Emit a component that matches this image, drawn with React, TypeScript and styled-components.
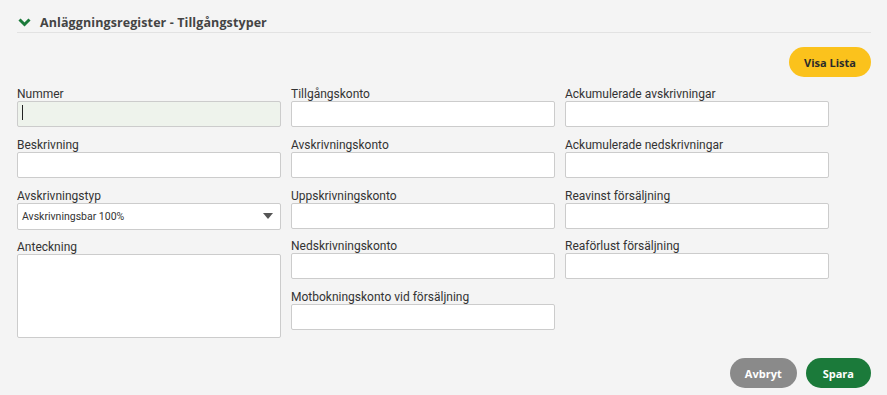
import React from 'react';
import styled, { createGlobalStyle } from 'styled-components';

const colors = {
  bg: '#f4f4f4',
  text: '#333333',
  heading: '#444444',
  border: '#cccccc',
  green: '#1b7a3a',
  yellow: '#fbc21c',
  gray: '#8a8a8a',
};

const GlobalStyle = createGlobalStyle`
  html, body {
    margin: 0;
    padding: 0;
    background: ${colors.bg};
    font-family: Roboto, "Liberation Sans", sans-serif;
  }
`;

const Page = styled.div`
  padding: 12px 16px 0 17px;
  height: 395px;
  box-sizing: border-box;
`;

const Header = styled.div`
  display: flex;
  align-items: center;
  gap: 9px;
  height: 20px;
  padding-left: 1px;
  border-bottom: 1px solid #e2e2e2;
`;

const HeaderTitle = styled.h2`
  margin: 0;
  font-family: "Open Sans", sans-serif;
  font-size: 12.5px;
  font-weight: 700;
  color: ${colors.heading};
  letter-spacing: 0.1px;
`;

const Toolbar = styled.div`
  display: flex;
  justify-content: flex-end;
  margin-top: 14px;
`;

const PillButton = styled.button<{ tone: 'yellow' | 'gray' | 'green' }>`
  border: none;
  border-radius: 16px;
  height: 30px;
  padding: 0 ${({ tone }) => (tone === 'green' ? 17 : 15)}px;
  font-family: "Open Sans", sans-serif;
  font-size: 11px;
  font-weight: 700;
  cursor: pointer;
  background: ${({ tone }) =>
    tone === 'yellow' ? colors.yellow : tone === 'gray' ? colors.gray : colors.green};
  color: ${({ tone }) => (tone === 'yellow' ? '#2b2b2b' : '#ffffff')};
`;

const Grid = styled.div`
  display: grid;
  grid-template-columns: 264px 264px 264px;
  column-gap: 10px;
  margin-top: 10px;
  align-items: start;
`;

const Column = styled.div`
  display: flex;
  flex-direction: column;
  gap: 10.75px;
`;

const Field = styled.div`
  display: flex;
  flex-direction: column;
`;

const Label = styled.label`
  font-size: 12px;
  color: ${colors.text};
  line-height: 14px;
  height: 14px;
`;

const InputWrap = styled.div`
  position: relative;
`;

const TextInput = styled.input<{ active?: boolean }>`
  box-sizing: border-box;
  width: 100%;
  height: 26px;
  border: 1px solid ${colors.border};
  border-radius: 2px;
  background: ${({ active }) => (active ? '#eef3ec' : '#ffffff')};
  outline: none;
  padding: 0 6px;
  font-family: Roboto, sans-serif;
  font-size: 11px;
`;

const Caret = styled.span`
  position: absolute;
  left: 5px;
  top: 4px;
  width: 1px;
  height: 15px;
  background: #222;
`;

const TextArea = styled.textarea`
  box-sizing: border-box;
  width: 100%;
  height: 84px;
  border: 1px solid ${colors.border};
  border-radius: 2px;
  background: #fff;
  resize: none;
  outline: none;
`;

const SelectBox = styled.div`
  box-sizing: border-box;
  display: flex;
  align-items: center;
  justify-content: space-between;
  height: 27px;
  border: 1px solid ${colors.border};
  border-radius: 2px;
  background: #fff;
  padding: 0 7px 0 4px;
  font-size: 10.5px;
  color: ${colors.text};
`;

const Footer = styled.div`
  display: flex;
  justify-content: flex-end;
  gap: 9px;
  margin-top: 20px;
`;

const Chevron = () => (
  <svg width="13" height="9" viewBox="0 0 13 9">
    <path d="M1.5 1.5 L6.5 6.5 L11.5 1.5" fill="none" stroke={colors.green} strokeWidth="3" />
  </svg>
);

const Triangle = () => (
  <svg width="10" height="6" viewBox="0 0 10 6">
    <path d="M0 0 L10 0 L5 6 Z" fill="#555" />
  </svg>
);

const TextField: React.FC<{ label: string; active?: boolean }> = ({ label, active }) => (
  <Field>
    <Label>{label}</Label>
    <InputWrap>
      <TextInput active={active} />
      {active && <Caret />}
    </InputWrap>
  </Field>
);

const col2 = [
  'Tillgångskonto',
  'Avskrivningskonto',
  'Uppskrivningskonto',
  'Nedskrivningskonto',
  'Motbokningskonto vid försäljning',
];

const col3 = [
  'Ackumulerade avskrivningar',
  'Ackumulerade nedskrivningar',
  'Reavinst försäljning',
  'Reaförlust försäljning',
];

export default function App() {
  return (
    <Page>
      <GlobalStyle />
      <Header>
        <Chevron />
        <HeaderTitle>Anläggningsregister - Tillgångstyper</HeaderTitle>
      </Header>
      <Toolbar>
        <PillButton tone="yellow">Visa Lista</PillButton>
      </Toolbar>
      <Grid>
        <Column>
          <TextField label="Nummer" active />
          <TextField label="Beskrivning" />
          <Field>
            <Label>Avskrivningstyp</Label>
            <SelectBox>
              <span>Avskrivningsbar 100%</span>
              <Triangle />
            </SelectBox>
          </Field>
          <Field>
            <Label>Anteckning</Label>
            <TextArea />
          </Field>
        </Column>
        <Column>
          {col2.map(l => (
            <TextField key={l} label={l} />
          ))}
        </Column>
        <Column>
          {col3.map(l => (
            <TextField key={l} label={l} />
          ))}
        </Column>
      </Grid>
      <Footer>
        <PillButton tone="gray">Avbryt</PillButton>
        <PillButton tone="green">Spara</PillButton>
      </Footer>
    </Page>
  );
}
